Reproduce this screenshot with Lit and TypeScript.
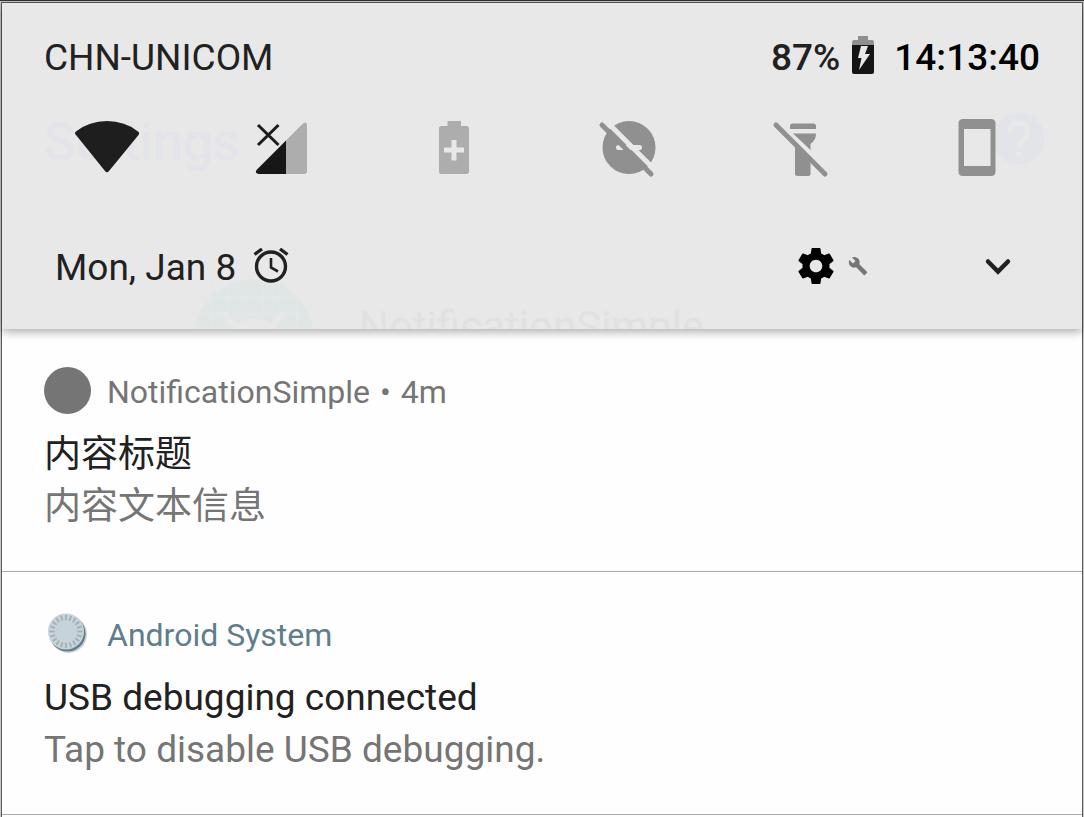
import { LitElement, html, svg, css } from "lit";
import { customElement, property } from "lit/decorators.js";

const slash = svg`<path d="M5 9L54 58" stroke="#909090" stroke-width="5" stroke-linecap="round"/>`;

const tiles = [
  {
    label: "Wi-Fi",
    icon: svg`<path fill="#1e1e1e" d="M1 19Q-1 17 1 15.500Q14 5 32 5Q50 5 63 15.500Q65 17 63.500 19L34 55Q32 57.500 30 55Z"/>`,
  },
  {
    label: "Mobile data",
    icon: svg`<path fill="#adadad" d="M37 24.500L53 8.500Q58 4 58 10V55Q58 58 55 58H37Z"/>
      <path fill="#171717" d="M37 24.500V58H9.500Q5 57 8 53.500Z"/>
      <path fill="none" stroke="#1c1c1c" stroke-width="3" d="M9 9L29.500 29M29.500 9L9 29"/>`,
  },
  {
    label: "Battery saver",
    icon: svg`<path fill="#adadad" fill-rule="evenodd" d="M24.500 5H38V10H43.500Q46 10 46 12.500V55.500Q46 58 43.500 58H18.500Q16 58 16 55.500V12.500Q16 10 18.500 10H24.500ZM28.500 24V31.500H21V36.500H28.500V44.500H33.500V36.500H41V31.500H33.500V24Z"/>`,
  },
  {
    label: "Do not disturb",
    icon: svg`<circle cx="32" cy="31.500" r="26.500" fill="#909090"/>
      <path d="M21.500 31.500H42.500" stroke="#e8e8e8" stroke-width="5" stroke-linecap="round"/>
      <path d="M8 4L62 58" stroke="#e8e8e8" stroke-width="5"/>${slash}`,
  },
  {
    label: "Flashlight",
    icon: svg`<path fill="#909090" d="M19 13V10Q19 7.500 21.500 7.500H42.500Q45 7.500 45 10V13Z"/>
      <path fill="#909090" d="M22 17.500H45Q45 24 39.500 28V34Z"/>
      <path fill="#909090" d="M24 27L39.500 43V57.500Q39.500 60 37 60H26.500Q24 60 24 57.500Z"/>${slash}`,
  },
  {
    label: "Portrait",
    icon: svg`<path fill="#909090" fill-rule="evenodd" d="M18 3H46Q50.500 3 50.500 7.500V55.500Q50.500 60 46 60H18Q13.500 60 13.500 55.500V7.500Q13.500 3 18 3ZM19 13V50H45.500V13Z"/>`,
  },
];

@customElement("quick-settings")
export class QuickSettings extends LitElement {
  static styles = css`
    :host {
      display: block;
      position: relative;
      z-index: 1;
      background: #e8e8e8;
      color: #212121;
      font-size: 37px;
      line-height: 44px;
      box-shadow: 0 3px 9px rgba(0, 0, 0, 0.32);
    }
    .behind {
      position: absolute;
      inset: 0;
      overflow: hidden;
    }
    .behind > * {
      position: absolute;
    }
    .ghost-title {
      left: 42px;
      top: 111px;
      font-size: 53px;
      line-height: 56px;
      font-weight: 500;
      color: #e3e4ea;
    }
    .ghost-help {
      right: 37px;
      top: 109px;
    }
    .ghost-app {
      left: 192px;
      top: 274px;
    }
    .ghost-name {
      left: 357px;
      top: 300px;
      font-size: 42px;
      line-height: 48px;
      color: #e1e1e1;
    }
    .content {
      position: relative;
    }
    .status,
    .footer {
      display: flex;
      align-items: center;
    }
    .status {
      padding: 33px 42px 0;
    }
    .carrier {
      flex: 1;
    }
    .percent,
    .clock {
      font-weight: 500;
    }
    .clock {
      color: #000;
      margin-left: 19px;
    }
    .battery {
      margin: 0 0 6px 12px;
    }
    .tiles {
      display: grid;
      grid-template-columns: repeat(6, 1fr);
      padding: 36px 18px 0;
    }
    button {
      display: flex;
      justify-content: center;
      align-items: center;
      border: 0;
      padding: 0;
      background: none;
      cursor: pointer;
    }
    svg {
      display: block;
    }
    .footer {
      padding: 62px 67px 39px 53px;
    }
    .date {
      flex: 1;
      display: flex;
      align-items: center;
      gap: 17px;
    }
    .day {
      padding-top: 4px;
    }
    .gear {
      gap: 14px;
    }
    .expand {
      margin-left: 113px;
    }
  `;

  render() {
    return html`
      <div class="behind" aria-hidden="true">
        <span class="ghost-title">Settings</span>
        <svg class="ghost-help" width="53" height="53" viewBox="0 0 53 53">
          <circle cx="26.500" cy="26.500" r="26" fill="#e3e4ea" />
          <path d="M17.500 20Q18 11 27 11Q36 11 36 20Q36 25 31 28.500Q27 32 27 36M27 40V45" fill="none" stroke="#e8e8e8" stroke-width="5" />
        </svg>
        <svg class="ghost-app" width="120" height="60" viewBox="0 0 120 60">
          <circle cx="60" cy="62" r="60" fill="#e0e6e5" />
          <path d="M18 0V60M35 0V60M52 0V60M69 0V60M86 0V60M103 0V60M0 20H120M0 37H120" stroke="#e4e8e8" fill="none" />
          <path d="M32 38L42 50M88 38L78 50" stroke="#e8e8e8" stroke-width="6" stroke-linecap="round" />
          <path d="M30 60Q40 42 60 42Q80 42 90 60Z" fill="#e8e8e8" />
        </svg>
        <span class="ghost-name">NotificationSimple</span>
      </div>
      <div class="content">
        <div class="status">
          <span class="carrier">CHN-UNICOM</span>
          <span class="percent">87%</span>
          <svg class="battery" width="23" height="38" viewBox="0 0 23 38" aria-hidden="true">
            <path fill="#909090" d="M6 0H16V4H20Q22 4 22 6V10H0V6Q0 4 2 4H6Z" />
            <path fill="#151515" d="M0 9H22V36Q22 38 20 38H2Q0 38 0 36Z" />
            <path fill="#e8e8e8" d="M9 10H16L13 18H18L7 34L9.500 22H6Z" />
          </svg>
          <span class="clock">14:13:40</span>
        </div>
        <div class="tiles">
          ${tiles.map(
            (t) => html`<button aria-label=${t.label}>
              <svg width="64" height="64" viewBox="0 0 64 64" fill="none">${t.icon}</svg>
            </button>`
          )}
        </div>
        <div class="footer">
          <span class="date">
            <span class="day">Mon, Jan 8</span>
            <svg width="36" height="36" viewBox="0 0 36 36" fill="none" stroke="#212121" aria-hidden="true">
              <circle cx="18" cy="18.500" r="14.500" stroke-width="3.400" />
              <path stroke-width="2.600" d="M18 10V19.500L25 23.500" />
              <path stroke-width="3.400" d="M1.500 6.500L9 1M34.500 6.500L27 1" />
            </svg>
          </span>
          <button class="gear" aria-label="Settings">
            <svg width="36" height="38" viewBox="2 1.500 20 21">
              <path d="M19.430 12.980c.04-.320.070-.640.070-.980s-.030-.660-.070-.980l2.110-1.650c.190-.150.240-.420.120-.640l-2-3.460c-.120-.220-.390-.300-.610-.220l-2.490 1c-.520-.400-1.080-.730-1.690-.980l-.380-2.650C14.460 2.180 14.250 2 14 2h-4c-.250 0-.460.180-.490.420l-.380 2.650c-.610.250-1.170.590-1.690.980l-2.490-1c-.230-.090-.490 0-.610.220l-2 3.460c-.130.220-.070.490.120.640l2.110 1.650c-.040.320-.070.650-.070.980s.030.660.070.980l-2.110 1.650c-.190.150-.240.420-.120.640l2 3.460c.120.220.390.300.610.220l2.490-1c.520.400 1.080.730 1.690.980l.380 2.650c.030.240.240.420.490.420h4c.250 0 .460-.180.490-.420l.380-2.650c.610-.250 1.170-.590 1.690-.980l2.490 1c.230.090.490 0 .610-.220l2-3.460c.120-.220.070-.490-.120-.640l-2.110-1.650zM12 15.500c-1.930 0-3.500-1.570-3.500-3.500s1.570-3.500 3.500-3.500 3.500 1.570 3.500 3.500-1.570 3.500-3.500 3.500z" />
            </svg>
            <svg width="20" height="20" viewBox="0 0 24 24">
              <path fill="#767676" d="M22.700 19l-9.100-9.100c.900-2.300.4-5-1.500-6.900-2-2-5-2.400-7.400-1.300L9 6 6 9 1.600 4.700C.4 7.100.9 10.100 2.900 12.100c1.900 1.900 4.600 2.400 6.900 1.500l9.100 9.100c.400.400 1 .400 1.400 0l2.300-2.300c.500-.400.500-1.100.100-1.400z" />
            </svg>
          </button>
          <button class="expand" aria-label="Expand">
            <svg width="34" height="34" viewBox="0 0 34 34" fill="none">
              <path d="M7 12.500L17 22.500L27 12.500" stroke="#212121" stroke-width="4.500" stroke-linecap="round" />
            </svg>
          </button>
        </div>
      </div>
    `;
  }
}

@customElement("notification-card")
export class NotificationCard extends LitElement {
  @property() app = "";
  @property() time = "";
  @property() heading = "";
  @property() text = "";
  @property() tone = "grey";

  static styles = css`
    :host {
      display: block;
      padding: 36px 42px 38px;
      border-bottom: 1px solid #a9a9a9;
      font-size: 37px;
      line-height: 52px;
    }
    .head {
      display: flex;
      align-items: center;
      gap: 16px;
      height: 50px;
      margin-bottom: 14px;
      font-size: 32px;
      line-height: 38px;
      color: #757575;
    }
    .head.teal {
      color: #607d8b;
    }
    .meta {
      display: flex;
      gap: 10px;
      padding-top: 4px;
    }
    svg {
      display: block;
    }
    h2,
    p {
      margin: 0;
      font-size: inherit;
      font-weight: 400;
    }
    h2 {
      color: #212121;
    }
    p {
      color: #757575;
    }
  `;

  private dial() {
    const ticks = Array.from({ length: 20 }, (_, i) => {
      const a = (i * Math.PI) / 10;
      const x = Math.cos(a);
      const y = Math.sin(a);
      return svg`<line x1=${22 + 11.5 * x} y1=${21.5 + 11.5 * y} x2=${22 + 16.5 * x} y2=${21.5 + 16.5 * y}/>`;
    });
    return svg`<circle cx="24.500" cy="24.500" r="18.500" fill="#c8d3d9"/>
      <circle cx="23.500" cy="23.500" r="18" fill="#607d8b"/>
      <circle cx="22" cy="21.500" r="18" fill="#c8d3d9"/>
      <g stroke="#9fb0b9" stroke-width="1.800">${ticks}</g>`;
  }

  render() {
    return html`
      <div class="head ${this.tone}">
        <svg width="47" height="47" viewBox="0 0 47 47" aria-hidden="true">
          ${this.tone === "teal"
            ? this.dial()
            : svg`<circle cx="23.500" cy="23.500" r="23.500" fill="#757575"/>`}
        </svg>
        <span class="meta">
          <span>${this.app}</span>
          ${this.time ? html`<span>•</span><span>${this.time}</span>` : ""}
        </span>
      </div>
      <h2>${this.heading}</h2>
      <p>${this.text}</p>
    `;
  }
}

@customElement("app-root")
export class AppRoot extends LitElement {
  static styles = css`
    :host {
      display: block;
      box-sizing: border-box;
      min-height: 100vh;
      padding: 1px 1px 0;
      border-top: 1px solid #332f33;
      background: #c8c8c8;
      font-family: Roboto, "Noto Sans CJK SC", sans-serif;
    }
    .shade {
      box-sizing: border-box;
      min-height: calc(100vh - 2px);
      border: 1px solid #555a5a;
      border-bottom: 0;
      background: #fefefe;
    }
  `;

  render() {
    return html`
      <main class="shade">
        <quick-settings></quick-settings>
        <notification-card app="NotificationSimple" time="4m" heading="内容标题" text="内容文本信息"></notification-card>
        <notification-card
          app="Android System"
          tone="teal"
          heading="USB debugging connected"
          text="Tap to disable USB debugging."
        ></notification-card>
      </main>
    `;
  }
}
